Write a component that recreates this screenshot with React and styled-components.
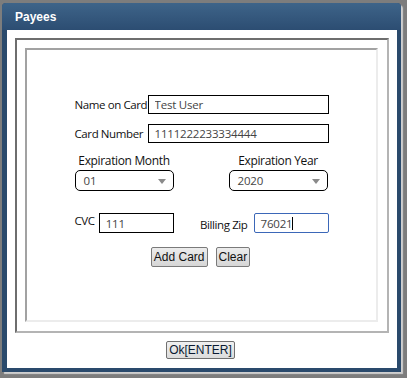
import styled, { createGlobalStyle } from "styled-components";

const GlobalStyle = createGlobalStyle`
  html, body {
    margin: 0;
    padding: 0;
    background: #7d7d7d;
  }
  body {
    width: 407px;
    height: 378px;
    overflow: hidden;
  }
`;

const App = () => {
  return (
    <>
      <GlobalStyle />
      <Page>
        <Dialog>
          <Header>Payees</Header>
          <Body>
            <OuterFrame>
              <InnerFrame>
                <Form>
                  <Row>
                    <Label>Name on Card</Label>
                    <TextInput defaultValue="Test User" />
                  </Row>
                  <Row>
                    <Label>Card Number</Label>
                    <TextInput defaultValue="1111222233334444" />
                  </Row>

                  <SelectRow>
                    <SelectGroup>
                      <SelectLabel>Expiration Month</SelectLabel>
                      <Select>
                        <span>01</span>
                        <Arrow />
                      </Select>
                    </SelectGroup>
                    <SelectGroup>
                      <SelectLabel>Expiration Year</SelectLabel>
                      <Select>
                        <span>2020</span>
                        <Arrow />
                      </Select>
                    </SelectGroup>
                  </SelectRow>

                  <SplitRow>
                    <Pair $gap="4px">
                      <ShortLabel $raised>CVC</ShortLabel>
                      <SmallInput defaultValue="111" />
                    </Pair>
                    <Pair $gap="6px">
                      <ShortLabel>Billing Zip</ShortLabel>
                      <FocusedInput>
                        76021<Caret />
                      </FocusedInput>
                    </Pair>
                  </SplitRow>

                  <Buttons>
                    <Button>Add Card</Button>
                    <Button>Clear</Button>
                  </Buttons>
                </Form>
              </InnerFrame>
            </OuterFrame>
            <Footer>
              <OkButton>Ok[ENTER]</OkButton>
            </Footer>
          </Body>
        </Dialog>
      </Page>
    </>
  );
};

export default App;

const Page = styled.div`
  padding: 3px 0 0 2px;
`;

const Dialog = styled.div`
  width: 399px;
  height: 369px;
  box-sizing: border-box;
  display: flex;
  flex-direction: column;
  background: #2a4a6c;
  border-radius: 4px 4px 0 0;
  padding: 0 4px 4px 5px;
  box-shadow: 2px 2px 1px #cfcfcf;
`;

const Header = styled.div`
  height: 27px;
  display: flex;
  align-items: center;
  padding-left: 13px;
  margin: 0 -4px 0 -5px;
  border-radius: 4px 4px 0 0;
  background: linear-gradient(#3e6489, #2c4d72);
  color: #fff;
  font-family: "Liberation Sans", Arial, sans-serif;
  font-weight: bold;
  font-size: 12px;
`;

const Body = styled.div`
  flex: 1;
  background: #fff;
  padding: 8px 8px 0 8px;
  display: flex;
  flex-direction: column;
`;

const OuterFrame = styled.div`
  height: 295px;
  box-sizing: border-box;
  border: 2px solid;
  border-color: #6e6e6e #b4b4b4 #b4b4b4 #6e6e6e;
  padding: 8px 9px 9px 8px;
  display: flex;
`;

const InnerFrame = styled.div`
  flex: 1;
  border: 2px solid;
  border-color: #a2a2a2 #ececec #ececec #a2a2a2;
  padding-top: 45px;
`;

const Form = styled.div`
  width: 254px;
  margin: 0 auto;
  display: flex;
  flex-direction: column;
  font-family: "Open Sans", sans-serif;
  color: #111;
`;

const Row = styled.div`
  display: flex;
  align-items: center;
  height: 19px;
  margin-bottom: 10px;
`;

const Label = styled.span`
  width: 73px;
  font-size: 11.5px;
  letter-spacing: -0.4px;
`;

const inputBase = `
  box-sizing: border-box;
  height: 19px;
  border: 1px solid #000;
  padding: 0 6px;
  font-family: "Open Sans", sans-serif;
  font-size: 11.5px;
  letter-spacing: -0.2px;
  color: #444;
  outline: none;
  background: #fff;
`;

const TextInput = styled.input`
  ${inputBase}
  width: 181px;
`;

const SelectRow = styled.div`
  display: flex;
  justify-content: space-between;
  margin: 0 1px 22px 0;
`;

const SelectGroup = styled.div`
  width: 99px;
  display: flex;
  flex-direction: column;
  align-items: center;
`;

const SelectLabel = styled.span`
  font-size: 12px;
  letter-spacing: -0.35px;
  line-height: 16px;
  margin-bottom: 1px;
`;

const Select = styled.div`
  box-sizing: border-box;
  width: 99px;
  height: 21px;
  border: 1px solid #000;
  border-radius: 5px;
  display: flex;
  align-items: center;
  justify-content: space-between;
  padding: 0 7px 0 8px;
  font-size: 11.5px;
  letter-spacing: -0.2px;
  color: #444;
`;

const Arrow = styled.span`
  width: 0;
  height: 0;
  border-left: 4px solid transparent;
  border-right: 4px solid transparent;
  border-top: 5px solid #8a8a8a;
  margin-top: 2px;
`;

const SplitRow = styled.div`
  display: flex;
  justify-content: space-between;
  margin-bottom: 14px;
`;

const Pair = styled.div`
  display: flex;
  align-items: center;
  gap: ${(p) => p.$gap};
`;

const ShortLabel = styled.span`
  font-size: 11.5px;
  letter-spacing: -0.4px;
  position: relative;
  top: ${(p) => (p.$raised ? "-3px" : "1px")};
`;

const SmallInput = styled.input`
  ${inputBase}
  width: 75px;
  height: 20px;
`;

const FocusedInput = styled.div`
  ${inputBase}
  width: 75px;
  height: 20px;
  display: flex;
  align-items: center;
  border: 1.5px solid #3b67b8;
  border-radius: 2px;
`;

const Caret = styled.span`
  display: inline-block;
  width: 1px;
  height: 13px;
  background: #000;
`;

const Buttons = styled.div`
  display: flex;
  justify-content: center;
  gap: 8px;
  margin-left: -2px;
`;

const Button = styled.button`
  height: 20px;
  padding: 0 2px;
  border: 1px solid #7a7a7a;
  border-radius: 2px;
  background: linear-gradient(#ececec, #d6d6d6);
  font-family: "Liberation Sans", Arial, sans-serif;
  font-size: 12px;
  color: #111;
`;

const Footer = styled.div`
  flex: 1;
  display: flex;
  justify-content: center;
  align-items: flex-start;
  padding-top: 8px;
`;

const OkButton = styled.button`
  height: 18px;
  padding: 0 2px;
  margin-left: -3px;
  border: 1px solid #707070;
  border-radius: 2px;
  background: linear-gradient(#f0f0f0, #dcdcdc);
  font-family: "Liberation Sans", Arial, sans-serif;
  font-size: 12px;
  color: #0b1a33;
`;
